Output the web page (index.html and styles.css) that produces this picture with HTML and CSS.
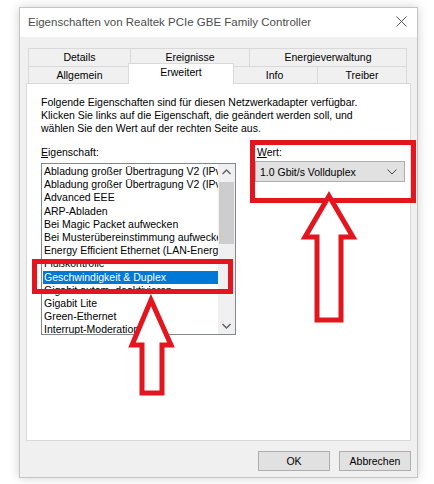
FILE: index.html
```html
<!DOCTYPE html>
<html lang="de">
<head>
    <meta charset="UTF-8">
    <title>Eigenschaften</title>
    <link rel="stylesheet" href="styles.css">
</head>
<body>
    <div class="window">
        <div class="titlebar">
            <span class="title">Eigenschaften von Realtek PCIe GBE Family Controller</span>
            <svg class="close" width="11" height="11" viewBox="0 0 11 11">
                <path d="M0.5 0.5 L10.5 10.5 M10.5 0.5 L0.5 10.5" stroke="#555" stroke-width="1" fill="none"/>
            </svg>
        </div>

        <div class="content">
            <div class="tabs">
                <div class="tab-row">
                    <div class="tab tab-details">Details</div>
                    <div class="tab tab-events">Ereignisse</div>
                    <div class="tab tab-power">Energieverwaltung</div>
                </div>
                <div class="tab-row">
                    <div class="tab tab-general">Allgemein</div>
                    <div class="tab tab-advanced active">Erweitert</div>
                    <div class="tab tab-info">Info</div>
                    <div class="tab tab-driver">Treiber</div>
                </div>
            </div>

            <div class="panel">
                <p class="intro">
                    Folgende Eigenschaften sind für diesen Netzwerkadapter verfügbar.<br>
                    Klicken Sie links auf die Eigenschaft, die geändert werden soll, und<br>
                    wählen Sie den Wert auf der rechten Seite aus.
                </p>

                <div class="fields">
                    <div class="field field-list">
                        <label><u>E</u>igenschaft:</label>
                        <div class="listbox">
                            <ul class="items">
                                <li>Abladung großer Übertragung V2 (IPv4)</li>
                                <li>Abladung großer Übertragung V2 (IPv6)</li>
                                <li>Advanced EEE</li>
                                <li>ARP-Abladen</li>
                                <li>Bei Magic Packet aufwecken</li>
                                <li>Bei Musterübereinstimmung aufwecken</li>
                                <li>Energy Efficient Ethernet (LAN-Energiesparmodus)</li>
                                <li>Flußkontrolle</li>
                                <li class="selected">Geschwindigkeit &amp; Duplex</li>
                                <li>Gigabit autom. deaktivieren</li>
                                <li>Gigabit Lite</li>
                                <li>Green-Ethernet</li>
                                <li>Interrupt-Moderation</li>
                            </ul>
                            <div class="scrollbar">
                                <svg class="scroll-arrow" width="17" height="17" viewBox="0 0 17 17">
                                    <path d="M4.5 10 L8.5 6 L12.5 10" stroke="#606060" stroke-width="1.4" fill="none"/>
                                </svg>
                                <div class="track">
                                    <div class="thumb"></div>
                                </div>
                                <svg class="scroll-arrow" width="17" height="17" viewBox="0 0 17 17">
                                    <path d="M4.5 7 L8.5 11 L12.5 7" stroke="#606060" stroke-width="1.4" fill="none"/>
                                </svg>
                            </div>
                        </div>
                    </div>

                    <div class="field field-value">
                        <label><u>W</u>ert:</label>
                        <div class="select">
                            <span>1.0 Gbit/s Vollduplex</span>
                            <svg width="10" height="6" viewBox="0 0 10 6">
                                <path d="M0.5 0.5 L5 5 L9.5 0.5" stroke="#444" stroke-width="1" fill="none"/>
                            </svg>
                        </div>
                    </div>
                </div>
            </div>

            <div class="buttons">
                <button class="btn">OK</button>
                <button class="btn">Abbrechen</button>
            </div>
        </div>
    </div>

    <!-- Markierungen -->
    <div class="mark mark-value"></div>
    <div class="mark mark-speed"></div>

    <svg class="arrow arrow-value" width="60" height="140" viewBox="300 190 60 140">
        <polygon points="329,196 353,237 341,237 341,320 317,320 317,237 305,237" fill="#fff" stroke="#e3161f" stroke-width="5" stroke-linejoin="miter"/>
    </svg>
    <svg class="arrow arrow-speed" width="50" height="104" viewBox="127 294 50 104">
        <polygon points="151,300 171,345 162,345 162,393 142,393 142,345 132,345" fill="#fff" stroke="#e3161f" stroke-width="5" stroke-linejoin="miter"/>
    </svg>
</body>
</html>
```

FILE: styles.css
```css
* {
    box-sizing: border-box;
}

body {
    margin: 0;
    padding: 0;
    background: #ffffff;
    font-family: 'Liberation Sans', Arial, sans-serif;
    font-size: 10.5px;
    color: #000000;
    position: relative;
    width: 434px;
    height: 484px;
    overflow: hidden;
}

.window {
    width: 399px;
    height: 471px;
    margin-left: 19px;
    margin-top: 7px;
    border: 1px solid #c4c4c4;
    box-shadow: 0 0 10px rgba(0, 0, 0, 0.18);
    display: flex;
    flex-direction: column;
    background: #f0f0f0;
}

.titlebar {
    height: 29px;
    background: #ffffff;
    display: flex;
    align-items: center;
    justify-content: space-between;
    padding: 0 10px 2px 8px;
}

.title {
    font-size: 11.5px;
    color: #4d4d4d;
}

.close {
    display: block;
}

.content {
    flex: 1;
    padding: 11px 6px 0 6px;
    display: flex;
    flex-direction: column;
}

/* Reiter */

.tabs {
    margin: 0 3px 0 2px;
}

.tab-row {
    display: flex;
}

.tab-row:first-child .tab {
    height: 18px;
}

.tab-row:last-child .tab {
    height: 17px;
}

.tab {
    border-top: 1px solid #d9d9d9;
    border-right: 1px solid #d9d9d9;
    background: #f0f0f0;
    text-align: center;
    line-height: 16px;
}

.tab:first-child {
    border-left: 1px solid #d9d9d9;
}

.tab-details,
.tab-general {
    width: 103px;
}

.tab-events {
    width: 119px;
}

.tab-power {
    width: 157px;
}

.tab-advanced {
    width: 101px;
}

.tab-info {
    width: 86px;
}

.tab-driver {
    width: 89px;
}

.tab.active {
    background: #ffffff;
    border: 1px solid #d9d9d9;
    border-bottom: none;
    width: 106px;
    margin: -3px -2px -1px -3px;
    height: 21px !important;
    line-height: 17px;
    position: relative;
    z-index: 1;
}

/* Inhalt */

.panel {
    height: 358px;
    background: #ffffff;
    border: 1px solid #d9d9d9;
    padding: 12px 4px 0 14px;
}

.intro {
    margin: 0;
    line-height: 13px;
}

.fields {
    display: flex;
    margin-top: 11px;
    gap: 19px;
}

.field label {
    display: block;
    line-height: 13px;
}

.field-list label {
    margin-bottom: 4px;
}

.field-value label {
    margin-bottom: 2px;
    padding-left: 2px;
}

.listbox {
    width: 195px;
    height: 172px;
    border: 1px solid #828790;
    display: flex;
    background: #ffffff;
}

.items {
    list-style: none;
    margin: 0;
    padding: 1px 0 0 1px;
    flex: 1;
    overflow: hidden;
}

.items li {
    height: 13.2px;
    line-height: 13px;
    padding-left: 1px;
    white-space: nowrap;
    overflow: hidden;
}

.items li.selected {
    background: #0078d7;
    color: #ffffff;
}

.scrollbar {
    width: 17px;
    background: #f0f0f0;
    display: flex;
    flex-direction: column;
}

.scroll-arrow {
    display: block;
}

.track {
    flex: 1;
    padding: 1px 1px 0 1px;
}

.thumb {
    height: 62px;
    background: #cdcdcd;
}

.select {
    width: 150px;
    height: 21px;
    background: #e1e1e1;
    border: 1px solid #adadad;
    display: flex;
    align-items: center;
    justify-content: space-between;
    padding: 0 7px 0 4px;
}

.select svg {
    display: block;
}

/* Schaltflächen */

.buttons {
    display: flex;
    justify-content: flex-end;
    gap: 9px;
    margin-top: 10px;
}

.btn {
    width: 72px;
    height: 20px;
    background: #e1e1e1;
    border: 1px solid #adadad;
    font-family: 'Liberation Sans', Arial, sans-serif;
    font-size: 10.5px;
    color: #000000;
    padding: 0;
}

/* rote Markierungen */

.mark {
    position: absolute;
    border: 5px solid #e3161f;
}

.mark-value {
    left: 250px;
    top: 140px;
    width: 166px;
    height: 63px;
}

.mark-speed {
    left: 32px;
    top: 259px;
    width: 201px;
    height: 35px;
}

.arrow {
    position: absolute;
}

.arrow-value {
    left: 300px;
    top: 190px;
}

.arrow-speed {
    left: 127px;
    top: 294px;
}
```
